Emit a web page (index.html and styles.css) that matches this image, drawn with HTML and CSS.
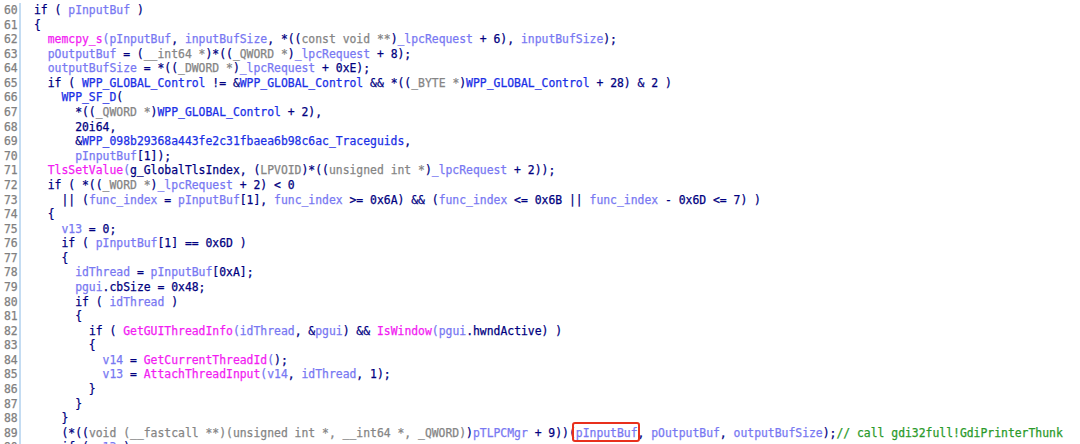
FILE: index.html
```html
<!DOCTYPE html>
<html>
<head>
<meta charset="utf-8">
<link rel="stylesheet" href="styles.css">
</head>
<body>
<div class="view">
  <div class="gutter">
    <div>60</div><div>61</div><div>62</div><div>63</div><div>64</div><div>65</div><div>66</div><div>67</div><div>68</div><div>69</div>
    <div>70</div><div>71</div><div>72</div><div>73</div><div>74</div><div>75</div><div>76</div><div>77</div><div>78</div><div>79</div>
    <div>80</div><div>81</div><div>82</div><div>83</div><div>84</div><div>85</div><div>86</div><div>87</div><div>88</div><div>89</div>
    <div>90</div>
  </div>
  <div class="code">
<div class="ln"><span class="k">if</span> ( <span class="v">pInputBuf</span> )</div>
<div class="ln">{</div>
<div class="ln">  <span class="f">memcpy_s</span><span class="v">(pInputBuf</span>, <span class="v">inputBufSize</span>, *((<span class="t">const void **</span>)<span class="v">_lpcRequest</span> + 6), <span class="v">inputBufSize</span>);</div>
<div class="ln">  <span class="v">pOutputBuf</span> = (<span class="t">__int64 *</span>)*((<span class="t">_QWORD *</span>)<span class="v">_lpcRequest</span> + 8);</div>
<div class="ln">  <span class="v">outputBufSize</span> = *((<span class="t">_DWORD *</span>)<span class="v">_lpcRequest</span> + 0xE);</div>
<div class="ln">  <span class="k">if</span> ( <span class="g">WPP_GLOBAL_Control</span> != &amp;<span class="g">WPP_GLOBAL_Control</span> &amp;&amp; *((<span class="t">_BYTE *</span>)<span class="g">WPP_GLOBAL_Control</span> + 28) &amp; 2 )</div>
<div class="ln">    <span class="g">WPP_SF_D</span>(</div>
<div class="ln">      *((<span class="t">_QWORD *</span>)<span class="g">WPP_GLOBAL_Control</span> + 2),</div>
<div class="ln">      20i64,</div>
<div class="ln">      &amp;<span class="g">WPP_098b29368a443fe2c31fbaea6b98c6ac_Traceguids</span>,</div>
<div class="ln">      <span class="v">pInputBuf</span>[1]);</div>
<div class="ln">  <span class="f">TlsSetValue</span><span class="v">(</span><span class="gd">g_GlobalTlsIndex</span>, (<span class="t">LPVOID</span>)*((<span class="t">unsigned int *</span>)<span class="v">_lpcRequest</span> + 2));</div>
<div class="ln">  <span class="k">if</span> ( *((<span class="t">_WORD *</span>)<span class="v">_lpcRequest</span> + 2) &lt; 0</div>
<div class="ln">    || (<span class="v">func_index</span> = <span class="v">pInputBuf</span>[1], <span class="v">func_index</span> &gt;= 0x6A) &amp;&amp; (<span class="v">func_index</span> &lt;= 0x6B || <span class="v">func_index</span> - 0x6D &lt;= 7) )</div>
<div class="ln">  {</div>
<div class="ln">    <span class="v">v13</span> = 0;</div>
<div class="ln">    <span class="k">if</span> ( <span class="v">pInputBuf</span>[1] == 0x6D )</div>
<div class="ln">    {</div>
<div class="ln">      <span class="v">idThread</span> = <span class="v">pInputBuf</span>[0xA];</div>
<div class="ln">      <span class="v">pgui</span>.cbSize = 0x48;</div>
<div class="ln">      <span class="k">if</span> ( <span class="v">idThread</span> )</div>
<div class="ln">      {</div>
<div class="ln">        <span class="k">if</span> ( <span class="f">GetGUIThreadInfo</span><span class="v">(idThread</span>, &amp;<span class="v">pgui</span>) &amp;&amp; <span class="f">IsWindow</span><span class="v">(pgui</span>.hwndActive) )</div>
<div class="ln">        {</div>
<div class="ln">          <span class="v">v14</span> = <span class="f">GetCurrentThreadId</span><span class="v">(</span>);</div>
<div class="ln">          <span class="v">v13</span> = <span class="f">AttachThreadInput</span><span class="v">(v14</span>, <span class="v">idThread</span>, 1);</div>
<div class="ln">        }</div>
<div class="ln">      }</div>
<div class="ln">    }</div>
<div class="ln">    (*((<span class="t">void (__fastcall **)(unsigned int *, __int64 *, _QWORD)</span>)<span class="v">pTLPCMgr</span> + 9))(<span class="v mark">pInputBuf</span>, <span class="v">pOutputBuf</span>, <span class="v">outputBufSize</span>);<span class="c">// call gdi32full!GdiPrinterThunk</span></div>
<div class="ln">    <span class="k">if</span> ( <span class="v">v13</span> )</div>
  </div>
</div>
</body>
</html>
```

FILE: styles.css
```css
html, body {
  margin: 0;
  padding: 0;
  background: #ffffff;
  overflow: hidden;
  height: 444px;
}

.view {
  display: flex;
  font-family: "DejaVu Sans Mono", "Liberation Mono", monospace;
  font-size: 11.4px;
  line-height: 14.58px;
  padding-top: 3px;
  color: #000080;
  -webkit-text-stroke: 0.25px currentColor;
}

.gutter {
  width: 15px;
  padding-left: 4px;
  border-right: 2px solid #c4dcf2;
  color: #808080;
  min-height: 480px;
}

.code {
  padding-left: 13px;
  flex: 1;
}

.ln {
  white-space: pre;
}

.k { color: #000080; }
.v { color: #7878f2; }
.g { color: #1a2fe6; }
.gd { color: #000080; }
.f { color: #f21cf2; }
.t { color: #858585; }
.c { color: #2a9a2a; }

.mark {
  position: relative;
}

.mark::after {
  content: "";
  position: absolute;
  left: -4px;
  right: -2px;
  top: -4px;
  bottom: -2px;
  border: 2px solid #e8301c;
  border-radius: 3px;
  -webkit-text-stroke: 0;
}
```
